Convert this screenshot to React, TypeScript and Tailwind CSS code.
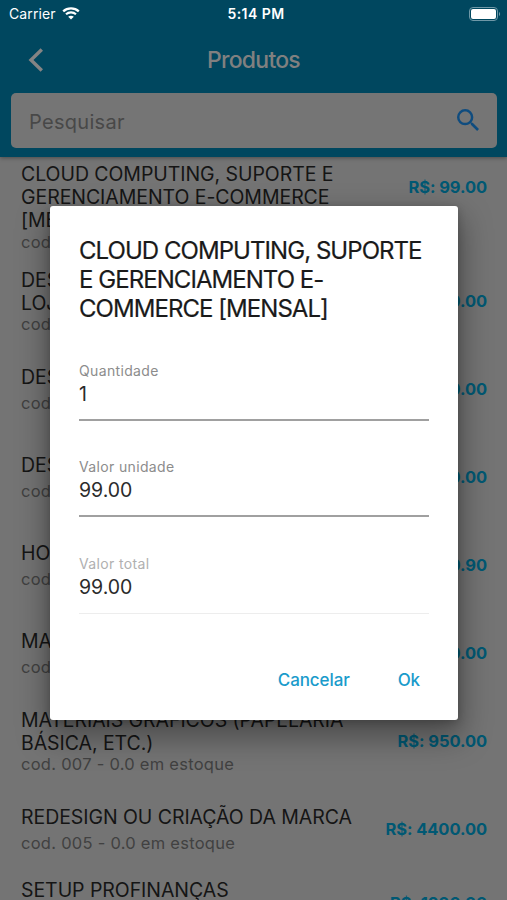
import { clsx } from 'clsx';

type Product = {
  title: string[];
  cod: string;
  price: string;
};

const products: Product[] = [
  { title: ['CLOUD COMPUTING, SUPORTE E', 'GERENCIAMENTO E-COMMERCE', '[MENSAL]'], cod: '001', price: '99.00' },
  { title: ['DESENVOLVIMENTO DE', 'LOJA VIRTUAL'], cod: '002', price: '4500.00' },
  { title: ['DESENVOLVIMENTO DE SITE'], cod: '003', price: '2500.00' },
  { title: ['DESIGN DE INTERFACE'], cod: '004', price: '1200.00' },
  { title: ['HOSPEDAGEM'], cod: '006', price: '49.90' },
  { title: ['MANUTENÇÃO'], cod: '008', price: '150.00' },
  { title: ['MATERIAIS GRÁFICOS (PAPELARIA', 'BÁSICA, ETC.)'], cod: '007', price: '950.00' },
  { title: ['REDESIGN OU CRIAÇÃO DA MARCA'], cod: '005', price: '4400.00' },
  { title: ['SETUP PROFINANÇAS', 'E-COMMERCE', '[ANUAL]'], cod: '009', price: '1800.00' },
];

const StatusBar = () => {
  return (
    <div className="h-7 grid grid-cols-3 items-center pl-[9px] pr-1.5 text-white">
      <div className="flex items-center gap-1.5">
        <span className="text-[14px] leading-none tracking-[0.1px]">Carrier</span>
        <svg viewBox="0 0 18 13" className="w-[18px] h-[13px] -mt-0.5" fill="none">
          <path d="M1.2 4.4C5.5 .4 12.5 .4 16.8 4.4" stroke="currentColor" strokeWidth="2.3" />
          <path d="M4 7.3C6.8 4.8 11.2 4.8 14 7.3" stroke="currentColor" strokeWidth="2.2" />
          <path d="M9 12.5L6.2 9.7C7.8 8.3 10.2 8.3 11.8 9.7Z" fill="currentColor" />
        </svg>
      </div>
      <span className="text-center text-[14px] leading-none font-semibold tracking-[0.45px] pl-0.5">5:14 PM</span>
      <svg viewBox="0 0 32 14" className="w-8 h-3.5 justify-self-end -mt-px" fill="none">
        <rect x=".5" y=".5" width="28" height="13" rx="3.5" stroke="#6f98a7" />
        <rect x="2" y="2" width="25" height="10" rx="2" fill="currentColor" />
        <path d="M30 5V9C31.5 8.5 31.5 5.5 30 5Z" fill="#6f98a7" />
      </svg>
    </div>
  );
};

const Header = () => {
  return (
    <header className="h-[157px] shrink-0 bg-[#00475f] relative shadow-[0_1px_4px_rgba(0,0,0,0.35)]">
      <StatusBar />
      <div className="h-[65px] grid grid-cols-[72px_1fr_72px] items-center">
        <svg viewBox="0 0 16 24" className="w-4 h-6 ml-7 -mt-0.5" fill="none">
          <path d="M13.8 1.5L3 12L13.8 22.5" stroke="#848484" strokeWidth="3.4" />
        </svg>
        <h1 className="text-center text-[23px] leading-none font-medium tracking-[-0.75px] text-[#808080]">Produtos</h1>
      </div>
      <div className="h-[55px] ml-[11px] mr-2.5 pl-[18px] pr-[18px] rounded-[5px] bg-[#757575] flex items-center justify-between">
        <span className="text-[20px] tracking-[0.3px] pt-0.5 text-[#484848]">Pesquisar</span>
        <svg viewBox="3 3 17.5 17.5" className="w-[22px] h-[22px] -mt-0.5" fill="#0f4c7f">
          <path d="M15.5 14h-.79l-.28-.27A6.471 6.471 0 0 0 16 9.5 6.5 6.5 0 1 0 9.5 16c1.61 0 3.09-.59 4.23-1.57l.27.28v.79l5 4.99L20.49 19l-4.99-5zm-6 0C7.01 14 5 11.99 5 9.5S7.01 5 9.5 5 14 7.01 14 9.5 11.99 14 9.5 14z" />
        </svg>
      </div>
    </header>
  );
};

const ProductRow = ({ title, cod, price }: Product) => {
  const tall = title.length === 3;
  return (
    <li className={clsx('shrink-0 flex justify-between px-5 pl-[21px]', tall ? 'h-[100px] pt-[5px]' : 'h-[88px] items-center')}>
      <div className="whitespace-nowrap">
        <p className="relative top-px text-[19.5px] leading-[23.2px] tracking-[-0.06px] text-[#151515]">
          {title.map((line) => (
            <span key={line} className="block">{line}</span>
          ))}
        </p>
        <p className={clsx('text-[16.5px] leading-5 tracking-[0.26px] text-[#414141]', title.length === 1 && 'mt-1')}>
          cod. {cod} - 0.0 em estoque
        </p>
      </div>
      <span className={clsx('text-[16.5px] leading-5 font-bold tracking-[-0.08px] whitespace-nowrap text-[#005873]', tall && 'mt-[15px]')}>
        R$: {price}
      </span>
    </li>
  );
};

const Field = ({ label, value, disabled }: { label: string; value: string; disabled?: boolean }) => {
  return (
    <div className={clsx('h-[59px] mb-[37.5px]', disabled ? 'border-b border-[#ededed]' : 'border-b-2 border-[#a0a0a0]')}>
      <div className={clsx('text-[14px] leading-[18px] tracking-[0.35px]', disabled ? 'text-[#b0b0b0]' : 'text-[#8c8c8c]')}>{label}</div>
      <div className="mt-0.5 text-[19.5px] leading-6 text-[#2b2b2b]">{value}</div>
    </div>
  );
};

const Dialog = () => {
  return (
    <div
      role="dialog"
      className="absolute left-[50px] top-[206px] w-[408px] h-[514px] rounded-[3px] bg-white px-[29px] pt-[29.5px] flex flex-col shadow-[0_14px_30px_4px_rgba(0,0,0,0.35),0_2px_8px_rgba(0,0,0,0.2)]"
    >
      <h2 className="mb-[38.5px] text-[24px] leading-[29.3px] tracking-[-0.95px] whitespace-nowrap text-[#1a1a1a] [-webkit-text-stroke:0.2px_#1a1a1a]">
        CLOUD COMPUTING, SUPORTE
        <br />E GERENCIAMENTO E-
        <br />COMMERCE [MENSAL]
      </h2>
      <Field label="Quantidade" value="1" />
      <Field label="Valor unidade" value="99.00" />
      <Field label="Valor total" value="99.00" disabled />
      <div className="mt-[17px] pr-[9px] flex justify-end gap-12 text-[17px] leading-6 font-medium tracking-[-0.1px] text-[#1a9bcb]">
        <button>Cancelar</button>
        <button>Ok</button>
      </div>
    </div>
  );
};

const App = () => {
  return (
    <div className="relative w-[507px] h-[900px] overflow-hidden flex flex-col bg-[#747474] font-['Inter','Liberation_Sans',sans-serif]">
      <Header />
      <ul className="flex flex-col">
        {products.map((p) => (
          <ProductRow key={p.cod} {...p} />
        ))}
      </ul>
      <Dialog />
    </div>
  );
};

export default App;
